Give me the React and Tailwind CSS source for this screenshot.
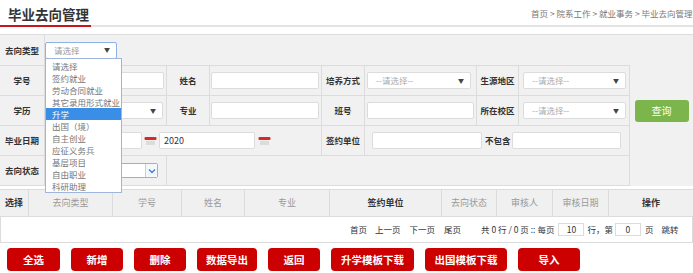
import React from "react";

const Arrow = () => <span className="text-[6px] text-[#444] leading-none">▼</span>;

const Input = ({ className = "", children }) => (
  <div className={"h-[17px] bg-white border border-[#dcdcdc] rounded-[2px] flex items-center text-[9px] text-[#333] " + className}>{children}</div>
);

const Sel = ({ className = "", text }) => (
  <div className={"h-[17px] bg-white border border-[#dcdcdc] rounded-[2px] flex items-center justify-between pl-[8px] pr-[6px] text-[8.5px] text-[#aaa] " + className}>
    <span>{text}</span>
    <Arrow />
  </div>
);

const Cal = () => (
  <svg width="13" height="11" viewBox="0 0 13 11" className="shrink-0">
    <rect x="0.5" y="2" width="12" height="3" rx="1" fill="#d42a2a" />
    <rect x="2" y="6.5" width="9" height="1" fill="#c8c8c8" />
    <rect x="2" y="8.5" width="9" height="1" fill="#c8c8c8" />
  </svg>
);

const Label = ({ children, className = "" }) => (
  <div className={"flex items-center justify-center border-r border-b border-[#dcdcdc] text-[8.5px] font-bold text-[#333] " + className}>{children}</div>
);

const Cell = ({ children, className = "" }) => (
  <div className={"flex items-center border-r border-b border-[#dcdcdc] " + className}>{children}</div>
);

const items = ["请选择", "签约就业", "劳动合同就业", "其它录用形式就业", "升学", "出国（境）", "自主创业", "应征义务兵", "基层项目", "自由职业", "科研助理"];

const cols = [
  ["选择", 29, true],
  ["去向类型", 84, false],
  ["学号", 69, false],
  ["姓名", 63, false],
  ["专业", 85, false],
  ["签约单位", 112, true],
  ["去向状态", 55, false],
  ["审核人", 56, false],
  ["审核日期", 56, false],
  ["操作", 84, true],
];

const buttons = [
  ["全选", 53],
  ["新增", 52],
  ["删除", 52],
  ["数据导出", 60],
  ["返回", 52],
  ["升学模板下载", 83],
  ["出国模板下载", 82],
  ["导入", 62],
];

export default function App() {
  return (
    <div className="w-[693px] h-[273px] overflow-hidden bg-white font-['Noto_Sans_CJK_SC',sans-serif]">
      {/* header */}
      <div className="h-[27px] flex items-end border-b-2 border-[#e3e3e3]">
        <div className="w-[531px] shrink-0 h-full">
          <div className="w-[91px] h-[27px] border-b-2 border-[#c8161d] pl-[8px] pt-[6px] text-[13.5px] leading-[17px] font-bold text-[#333] whitespace-nowrap">
            毕业去向管理
          </div>
        </div>
        <div className="self-center whitespace-nowrap text-[8.5px] text-[#777] pt-[2px]">
          首页 &gt; 院系工作 &gt; 就业事务 &gt; 毕业去向管理
        </div>
      </div>

      {/* form */}
      <div className="mt-[7px] flex bg-[#f1f1f1] border-t border-[#dcdcdc] h-[152px]">
        <div className="relative w-[630px] grid grid-cols-[45px_122px_43px_112px_43px_112px_42px_111px] grid-rows-[31px_30px_30px_30px_30px]">
          {/* row 1 */}
          <Label>去向类型</Label>
          <Cell className="col-span-7 border-r-0">
            <div className="h-[17px] w-[72px] bg-white border border-[#8ab3e8] rounded-[2px] flex items-center justify-between pl-[8px] pr-[6px] text-[8.5px] text-[#999]">
              <span>请选择</span>
              <Arrow />
            </div>
          </Cell>
          {/* row 2 */}
          <Label>学号</Label>
          <Cell className="pl-[3px]"><Input className="w-[116px]" /></Cell>
          <Label>姓名</Label>
          <Cell className="pl-[1px]"><Input className="w-[108px]" /></Cell>
          <Label>培养方式</Label>
          <Cell className="pl-[2px]"><Sel className="w-[104px]" text="--请选择--" /></Cell>
          <Label>生源地区</Label>
          <Cell className="pl-[4px]"><Sel className="w-[103px]" text="--请选择--" /></Cell>
          {/* row 3 */}
          <Label>学历</Label>
          <Cell className="pl-[3px]"><Sel className="w-[115px]" text="" /></Cell>
          <Label>专业</Label>
          <Cell className="pl-[1px]"><Input className="w-[108px]" /></Cell>
          <Label>班号</Label>
          <Cell className="pl-[2px]"><Input className="w-[107px]" /></Cell>
          <Label>所在校区</Label>
          <Cell className="pl-[4px]"><Sel className="w-[103px]" text="--请选择--" /></Cell>
          {/* row 4 */}
          <Label>毕业日期</Label>
          <Cell className="col-span-3 pl-[3px]">
            <Input className="w-[94px]" />
            <div className="ml-[2px] mr-[2px]"><Cal /></div>
            <Input className="w-[96px] pl-[4px]">2020</Input>
            <div className="ml-[3px]"><Cal /></div>
          </Cell>
          <Label>签约单位</Label>
          <Cell className="col-span-3 pl-[7px]">
            <Input className="w-[110px]" />
            <span className="ml-[3px] mr-[1px] text-[8.5px] font-bold text-[#333] whitespace-nowrap">不包含</span>
            <Input className="w-[109px]" />
          </Cell>
          {/* row 5 */}
          <Label>去向状态</Label>
          <Cell className="pl-[3px]">
            <div className="h-[15px] w-[110px] bg-white border border-[#8ab3e8] rounded-[2px] flex items-center justify-end">
              <div className="h-full w-[12px] border-l border-[#b9d0ef] bg-[#f4f8fd] flex items-center justify-center">
                <svg width="8" height="6" viewBox="0 0 8 6"><path d="M1 1.5 L4 4.5 L7 1.5" stroke="#3d7fd6" strokeWidth="1.4" fill="none" /></svg>
              </div>
            </div>
          </Cell>
          <Cell className="col-span-6" />

          {/* dropdown list */}
          <div className="absolute left-[45px] top-[23px] w-[77px] bg-white border border-[#9fb6dc] pt-[1px] z-10">
            {items.map((t) => (
              <div
                key={t}
                className={
                  "h-[12px] leading-[12px] pl-[6px] text-[8.5px] whitespace-nowrap " +
                  (t === "升学" ? "bg-[#3a8ee6] text-white" : "text-[#777]")
                }
              >
                {t}
              </div>
            ))}
          </div>
        </div>
        <div className="flex-1 flex items-center justify-center">
          <div className="w-[54px] h-[22px] rounded-[3px] bg-[#7cb54c] text-white text-[10px] flex items-center justify-center">
            查询
          </div>
        </div>
      </div>

      {/* table */}
      <div className="mt-[3px] flex h-[28px] bg-[#f0f0f0] border-y border-[#dcdcdc]">
        {cols.map(([t, w, b], i) => (
          <div
            key={t}
            style={{ width: w }}
            className={
              "shrink-0 flex items-center justify-center text-[9px] " +
              (i < cols.length - 1 ? "border-r border-[#dcdcdc] " : "") +
              (b ? "font-bold text-[#333]" : "text-[#999]")
            }
          >
            {t}
          </div>
        ))}
      </div>
      <div className="h-[26px] flex items-center border-b border-x border-[#dcdcdc] pl-[349px] text-[8.5px] text-[#333] whitespace-nowrap">
        <span>首页</span>
        <span className="ml-[8px]">上一页</span>
        <span className="ml-[9px]">下一页</span>
        <span className="ml-[9px]">尾页</span>
        <span className="ml-[20px]">共 0 行 / 0 页 :: 每页</span>
        <div className="ml-[4px] w-[26px] h-[13px] bg-white border border-[#dcdcdc] flex items-center justify-center">10</div>
        <span className="ml-[3px]">行，第</span>
        <div className="ml-[2px] w-[26px] h-[13px] bg-white border border-[#dcdcdc] flex items-center justify-center">0</div>
        <span className="ml-[4px]">页</span>
        <span className="ml-[8px]">跳转</span>
      </div>

      {/* buttons */}
      <div className="mt-[5px] flex gap-[11px] pl-[7px]">
        {buttons.map(([t, w]) => (
          <div
            key={t}
            style={{ width: w }}
            className="h-[23px] rounded-[4px] bg-[#cc0000] text-white text-[10.5px] font-bold flex items-center justify-center"
          >
            {t}
          </div>
        ))}
      </div>
    </div>
  );
}
